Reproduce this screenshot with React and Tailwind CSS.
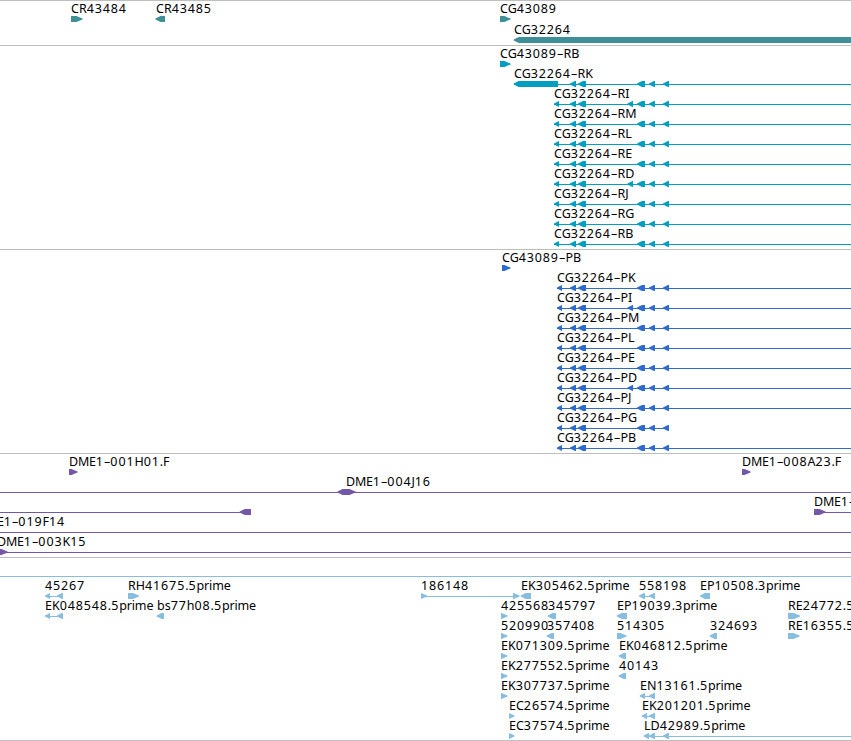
import React from 'react'

const introns = [
  [570, 576],
  [578, 586],
  [637, 645],
  [649, 655],
  [663, 669],
]

// one spliced model: thin line with a left pointing block for every exon
function model(label, start, { extra = false, end = 851, first = start + 5 } = {}) {
  const blocks = [[start, first], ...introns]
  if (extra) blocks.push([627.5, 633])
  return [{ label, x: start, line: [start, end], left: blocks }]
}

const genes = [
  [
    { label: 'CR43484', x: 71, right: [[71, 82.5]] },
    { label: 'CR43485', x: 156, left: [[155.5, 165]] },
    { label: 'CG43089', x: 500, right: [[500, 510.5]] },
  ],
  [{ label: 'CG32264', x: 514, left: [[513.7, 860]] }],
]

const transcripts = [
  [{ label: 'CG43089-RB', x: 500, right: [[500, 510.5]] }],
  [{ label: 'CG32264-RK', x: 514, line: [514, 851], left: [[513.7, 558], ...introns] }],
  model('CG32264-RI', 554, { extra: true }),
  model('CG32264-RM', 554),
  model('CG32264-RL', 554),
  model('CG32264-RE', 554),
  model('CG32264-RD', 554, { extra: true }),
  model('CG32264-RJ', 554),
  model('CG32264-RG', 554),
  model('CG32264-RB', 554),
]

const proteins = [
  [{ label: 'CG43089-PB', x: 502, right: [[502, 510.5]] }],
  model('CG32264-PK', 557),
  model('CG32264-PI', 557, { extra: true }),
  model('CG32264-PM', 557),
  model('CG32264-PL', 557),
  model('CG32264-PE', 557),
  model('CG32264-PD', 557, { extra: true }),
  model('CG32264-PJ', 557),
  model('CG32264-PG', 557, { end: 669 }),
  model('CG32264-PB', 557),
]

const clones = [
  [
    { label: 'DME1-001H01.F', x: 69, right: [[69, 77.5]] },
    { label: 'DME1-008A23.F', x: 742, right: [[742, 750.5]] },
  ],
  [{ label: 'DME1-004J16', x: 346, line: [0, 851], left: [[337.5, 347]], right: [[346, 355.5]] }],
  [
    { line: [0, 245], left: [[239.7, 251]] },
    { label: 'DME1-', x: 814, line: [818, 851], right: [[814, 825.5]] },
  ],
  [{ label: 'DME1-019F14', x: -23, line: [0, 851] }],
  [{ label: 'DME1-003K15', x: -3, line: [0, 851], right: [[-4, 7.5]] }],
]

const ests = [
  [{ line: [0, 851] }],
  [
    { label: '45267', x: 45, line: [47, 60], left: [[45, 50], [57, 63]] },
    { label: 'RH41675.5prime', x: 128, right: [[128, 139]] },
    { label: '186148', x: 421, line: [423, 516], right: [[421, 427], [513, 519.5]] },
    { label: 'EK305462.5prime', x: 521, left: [[520.7, 531]] },
    { label: '558198', x: 639, line: [641, 652], left: [[639, 645], [649, 655]] },
    { label: 'EP10508.3prime', x: 700, left: [[700, 710]] },
  ],
  [
    { label: 'EK048548.5prime', x: 45, line: [47, 60], left: [[45, 50], [57, 63]] },
    { label: 'bs77h08.5prime', x: 157, left: [[156.7, 164]] },
    { label: '425568', x: 501, right: [[501, 507.5]] },
    { label: '345797', x: 548, left: [[547.7, 556]] },
    { label: 'EP19039.3prime', x: 617, left: [[616.8, 627]] },
    { label: 'RE24772.5', x: 788, right: [[788, 800]] },
  ],
  [
    { label: '520990', x: 501, right: [[501, 507.5]] },
    { label: '357408', x: 547, left: [[546.7, 554]] },
    { label: '514305', x: 617, right: [[617, 626.5]] },
    { label: '324693', x: 710, left: [[709.7, 717]] },
    { label: 'RE16355.5', x: 788, right: [[788, 799.5]] },
  ],
  [
    { label: 'EK071309.5prime', x: 501, right: [[501, 507.5]] },
    { label: 'EK046812.5prime', x: 619, left: [[618.7, 626]] },
  ],
  [
    { label: 'EK277552.5prime', x: 501, right: [[501, 507.5]] },
    { label: '40143', x: 619, left: [[618.7, 626]] },
  ],
  [
    { label: 'EK307737.5prime', x: 501, right: [[501, 507.5]] },
    { label: 'EN13161.5prime', x: 640, line: [642, 652], left: [[639.7, 645], [649, 655]] },
  ],
  [
    { label: 'EC26574.5prime', x: 509, right: [[509, 514.5]] },
    { label: 'EK201201.5prime', x: 642, line: [644, 652], left: [[641.7, 647], [649, 655]] },
  ],
  [
    { label: 'EC37574.5prime', x: 509, right: [[509, 514.5]] },
    { label: 'LD42989.5prime', x: 644, line: [646, 851], left: [[643.7, 649], [649, 655], [663, 669]] },
  ],
]

function leftBlock([a, b]) {
  const neck = Math.min(a + 5, b)
  return `${a},2.6 ${neck},0 ${b},0 ${b},6 ${neck},6 ${a},3.4`
}

function rightBlock([a, b]) {
  const neck = Math.max(b - 6, a)
  return `${b},2.6 ${neck},0 ${a},0 ${a},6 ${neck},6 ${b},3.4`
}

function Label({ text, x }) {
  const runs = text.match(/\d+|[^\d-]+|-/g)
  return (
    <span className="absolute top-0 whitespace-pre" style={{ left: x }}>
      {runs.map((run, i) => {
        let spacing = ''
        if (/\d/.test(run)) spacing = 'tracking-[0.87px]'
        else if (run === '-') spacing = 'inline-block w-[6.5px] origin-center scale-x-[1.7] text-center'
        else if (run === 'DME') spacing = 'tracking-[-0.2px]'
        else if (run === 'prime') spacing = 'tracking-[-0.15px]'
        return <span key={i} className={spacing}>{run}</span>
      })}
    </span>
  )
}

function Row({ features, tall }) {
  return (
    <div className={`flex flex-col justify-end ${tall ? 'h-[21px]' : 'h-5'}`}>
      <div className="relative h-3.5">
        {features.filter((f) => f.label).map((f) => (
          <Label key={f.label} text={f.label} x={f.x} />
        ))}
      </div>
      <svg className="block h-1.5 w-[851px] shrink-0" viewBox="0 0 851 6" fill="currentColor">
        {features.map((f, i) => (
          <g key={i}>
            {f.line && <rect x={f.line[0]} y="3" width={f.line[1] - f.line[0]} height="1" />}
            {(f.left || []).map((b) => <polygon key={`l${b[0]}`} points={leftBlock(b)} />)}
            {(f.right || []).map((b) => <polygon key={`r${b[0]}`} points={rightBlock(b)} />)}
          </g>
        ))}
      </svg>
    </div>
  )
}

function Track({ rows, color, className = 'pb-0.5', tallLast }) {
  return (
    <section className={`border-t border-[#bebebe] pt-px ${color} ${className}`}>
      {rows.map((features, i) => (
        <Row key={i} features={features} tall={tallLast && i === rows.length - 1} />
      ))}
    </section>
  )
}

export default function App() {
  return (
    <main className="h-[741px] w-[851px] overflow-hidden bg-white font-['Noto_Sans',sans-serif] text-[12.5px] leading-[14px] [&_span]:text-black">
      <Track rows={genes} color="text-[#3f9096]" tallLast />
      <Track rows={transcripts} color="text-[#009fbf]" />
      <Track rows={proteins} color="text-[#2f6acd]" />
      <Track rows={clones} color="text-[#7458a8]" />
      <Track rows={ests} color="text-[#87bddf]" className="border-b pb-px" />
    </main>
  )
}
